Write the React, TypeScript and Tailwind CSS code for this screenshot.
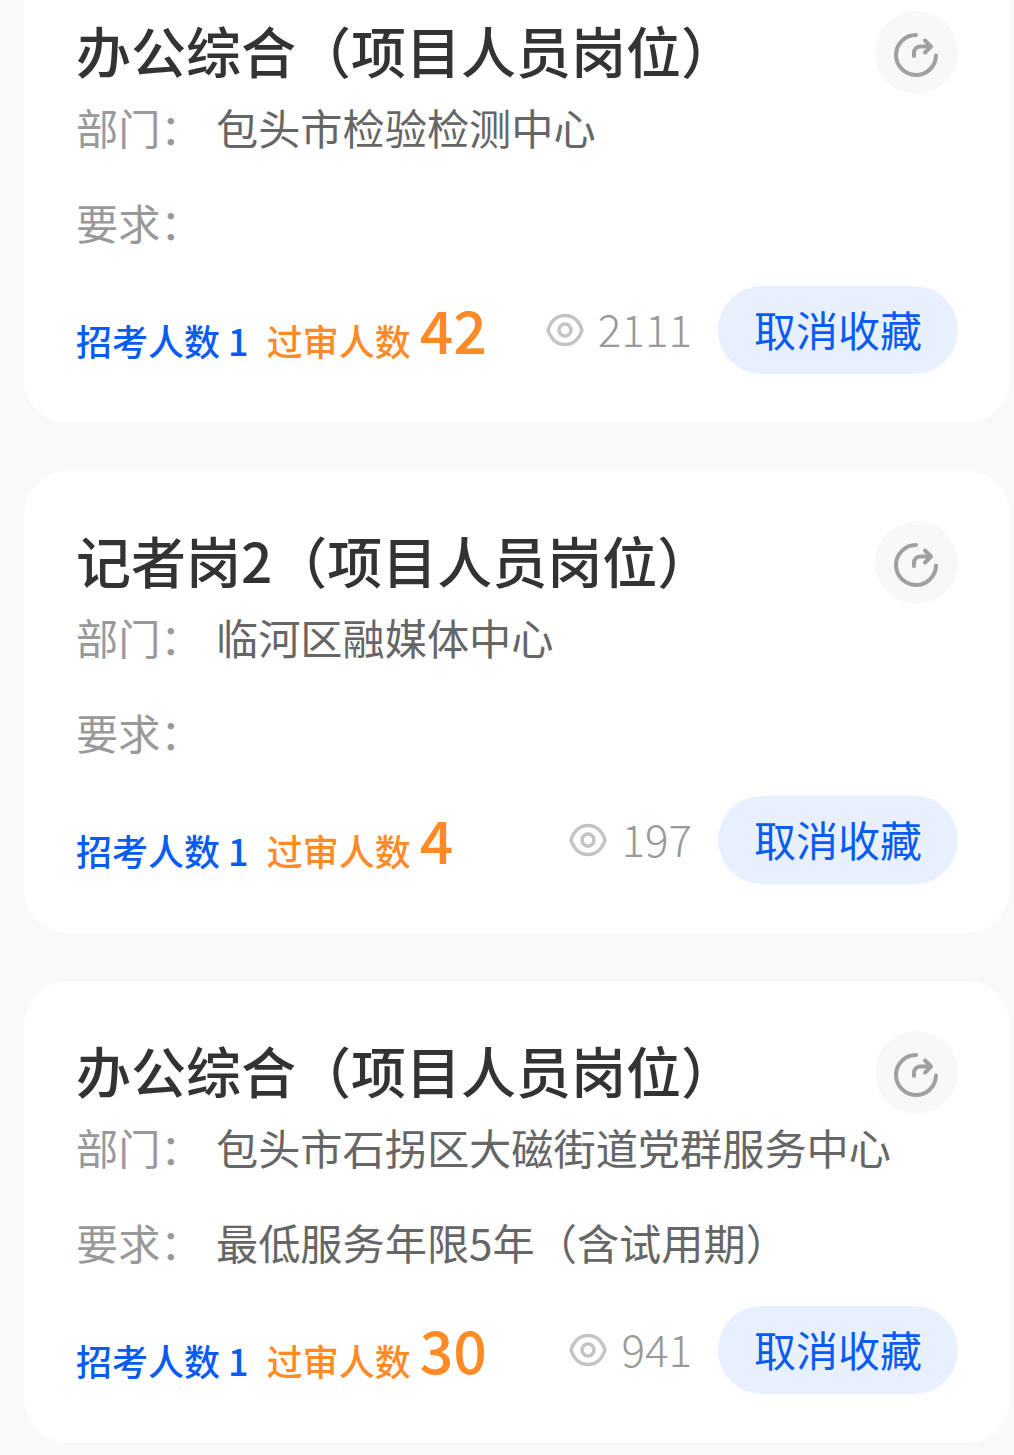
import React from 'react';

const jobs = [
  { title: '办公综合（项目人员岗位）', dept: '包头市检验检测中心', req: '', passed: 42, views: 2111 },
  { title: '记者岗2（项目人员岗位）', dept: '临河区融媒体中心', req: '', passed: 4, views: 197 },
  { title: '办公综合（项目人员岗位）', dept: '包头市石拐区大磁街道党群服务中心', req: '最低服务年限5年（含试用期）', passed: 30, views: 941 },
];

function ShareIcon() {
  return (
    <svg width="46" height="46" viewBox="0 0 46 46" fill="none" stroke="#a0a0a0" strokeWidth="4" strokeLinecap="round" strokeLinejoin="round" className="mt-1 -ml-px">
      <path d="M23 3A20 20 0 1 0 43 23.500" />
      <path d="M21 24v-3c0-4 3-6.500 6.500-6.500H37" />
      <path d="M32 8.500l6 6-6 6" />
    </svg>
  );
}

function EyeIcon() {
  return (
    <svg width="38" height="34" viewBox="0 0 38 34" fill="none" stroke="#c4c4c4" strokeWidth="3.500" className="mt-1">
      <path d="M2 17C5 8 11 2.500 19 2.500S33 8 36 17c-3 9-9 14.500-17 14.500S5 26 2 17z" />
      <circle cx="19" cy="17" r="6" />
    </svg>
  );
}

function JobCard({ job }: { job: (typeof jobs)[number] }) {
  return (
    <div className="h-[462px] ml-6 w-[986px] bg-white rounded-[44px] pt-[50px] px-[52px]">
      <div className="flex items-center justify-between h-[83px]">
        <h3 className="text-[55px] font-medium text-[#333333] leading-none mb-[6px]">{job.title}</h3>
        <div className="w-[83px] h-[83px] rounded-full bg-[#f8f8f8] flex items-center justify-center">
          <ShareIcon />
        </div>
      </div>

      <div className="flex items-center h-[72px] -mt-[3px] text-[42.200px] text-[#666666]">
        <span className="w-[140px] text-[#999999]">部门：</span>
        <span>{job.dept}</span>
      </div>
      <div className="flex items-center h-[72px] mt-[23px] text-[42.200px] text-[#666666]">
        <span className="w-[140px] text-[#999999]">要求：</span>
        <span>{job.req}</span>
      </div>

      <div className="flex items-center h-[88px] mt-[28px]">
        <div className="flex items-end h-[76px] mb-[6px]">
          <span className="text-[36px] leading-[50px] font-medium text-[#0a5cf0]">招考人数 1</span>
          <span className="text-[36px] leading-[50px] font-medium text-[#ff8a26] ml-[18px]">过审人数</span>
          <span className="text-[59px] leading-[72px] font-medium text-[#ff8a26] ml-[9px]">{job.passed}</span>
        </div>
        <div className="ml-auto flex items-center gap-[14px] mb-1 text-[44px] font-light text-[#999999]">
          <EyeIcon />
          <span>{job.views}</span>
        </div>
        <button className="ml-[26px] w-[240px] h-[88px] pb-1 rounded-full bg-[#e8f0fe] text-[42px] text-[#0a5cf0]">取消收藏</button>
      </div>
    </div>
  );
}

export default function App() {
  return (
    <div className="h-[1455px] overflow-hidden bg-[#f9f9f9] font-['Noto_Sans_CJK_SC','Noto_Sans',sans-serif]">
      <div className="flex flex-col gap-[48px] -mt-[39px]">
        {jobs.map((job, i) => (
          <JobCard key={i} job={job} />
        ))}
      </div>
    </div>
  );
}
